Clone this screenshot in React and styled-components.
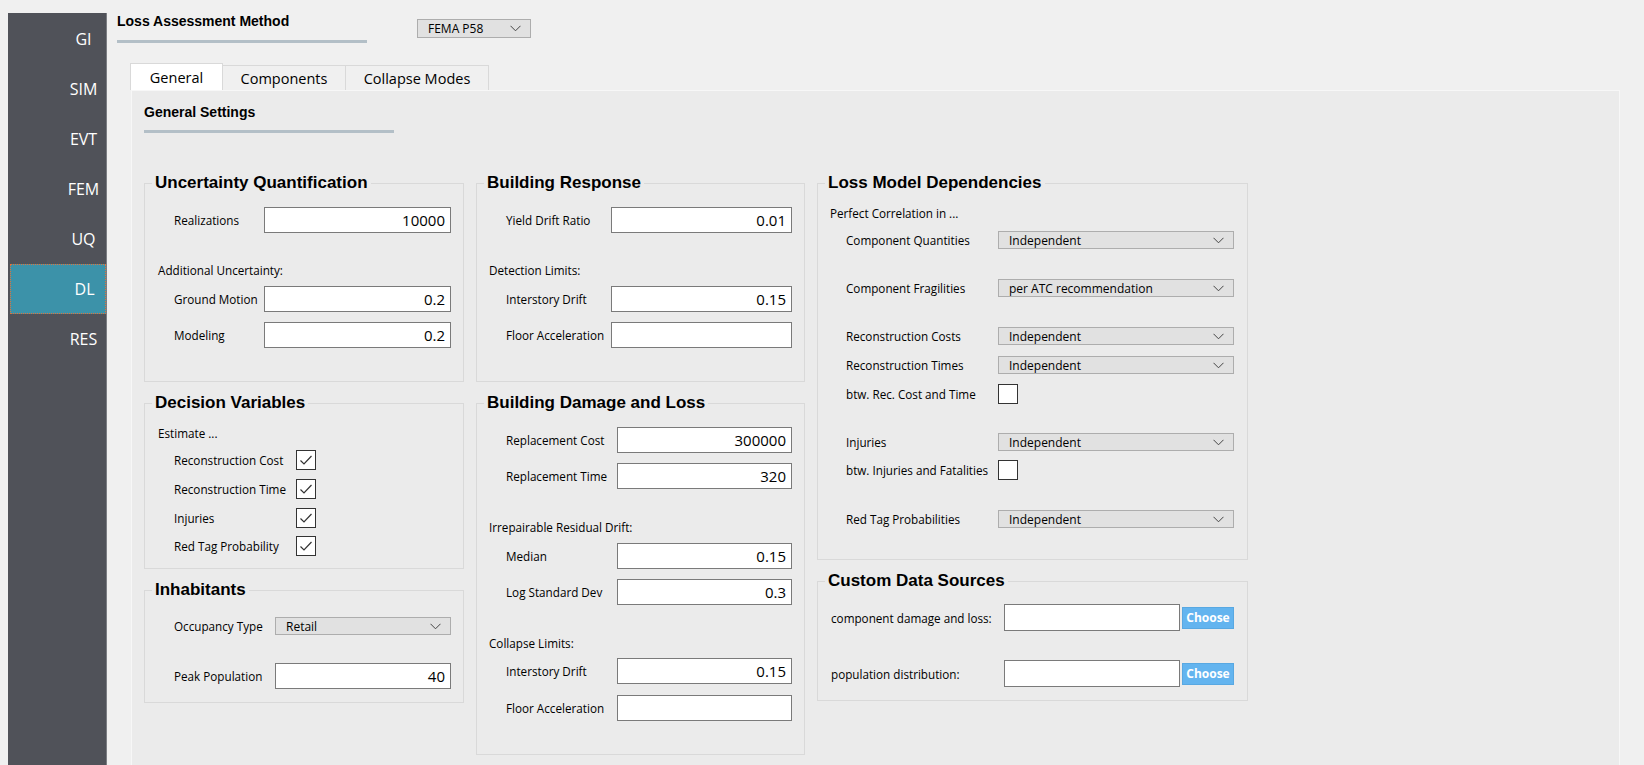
import React from "react";
import styled, { createGlobalStyle } from "styled-components";

const GlobalStyle = createGlobalStyle`
  html, body {
    margin: 0;
    padding: 0;
    background: #f0f0f0;
    font-family: "Open Sans", "Noto Sans", sans-serif;
    color: #000;
  }
  * {
    box-sizing: border-box;
  }
`;

const Window = styled.div`
  display: flex;
  height: 100vh;
  overflow: hidden;
  background: #f0f0f0;
`;

const Sidebar = styled.nav`
  width: 99px;
  margin: 13px 0 0 8px;
  padding-top: 1px;
  background: #505259;
  border-right: 1px solid #7c7e83;
  display: flex;
  flex-direction: column;
`;

const NavItem = styled.div`
  height: 50px;
  display: flex;
  align-items: center;
  justify-content: center;
  padding-left: 53px;
  color: #fff;
  font-size: 16px;
  background: ${(p) => (p.$active ? "#3c92a9" : "transparent")};
  outline: ${(p) => (p.$active ? "1px dotted #e0733a" : "none")};
  outline-offset: -1px;
  margin-left: ${(p) => (p.$active ? "2px" : "0")};
`;

const Main = styled.main`
  flex: 1;
  display: flex;
  flex-direction: column;
  padding: 13px 0 0 10px;
  min-width: 0;
`;

const HeaderRow = styled.div`
  display: flex;
  align-items: flex-start;
`;

const TitleBlock = styled.div`
  width: 250px;
  display: flex;
  flex-direction: column;
`;

const BoldTitle = styled.div`
  font-family: "Liberation Sans", Arial, sans-serif;
  font-weight: bold;
  font-size: 14px;
  line-height: 17px;
`;

const Bar = styled.div`
  height: 3px;
  margin-top: ${(p) => p.$mt || 10}px;
  background: #b3bfc7;
`;

const Select = styled.div`
  width: ${(p) => p.$w}px;
  height: ${(p) => p.$h || 18}px;
  margin: ${(p) => p.$margin || "0"};
  display: flex;
  align-items: center;
  justify-content: space-between;
  padding: 0 9px 0 10px;
  background: #e1e1e1;
  border: 1px solid #adadad;
  font-size: 12px;
  flex-shrink: 0;
`;

const Tabs = styled.div`
  display: flex;
  align-items: flex-end;
  margin: 20px 0 0 13px;
  height: 27px;
`;

const Tab = styled.div`
  width: ${(p) => p.$w}px;
  height: ${(p) => (p.$active ? 27 : 25)}px;
  display: flex;
  align-items: center;
  justify-content: center;
  font-size: 14.5px;
  background: ${(p) => (p.$active ? "#fff" : "#f0f0f0")};
  border: 1px solid #d9d9d9;
  border-bottom: none;
  margin-right: -1px;
  position: relative;
  z-index: ${(p) => (p.$active ? 1 : 0)};
`;

const Panel = styled.section`
  flex: 1;
  margin-left: 14px;
  width: 1489px;
  background: #ebebeb;
  border: 1px solid #f7f7f7;
  border-bottom: none;
  padding: 13px 0 0 12px;
`;

const SettingsBlock = styled.div`
  width: 250px;
`;

const Columns = styled.div`
  display: grid;
  grid-template-columns: 320px 329px 431px;
  column-gap: 12px;
  margin-top: 50px;
  align-items: start;
`;

const Column = styled.div`
  display: flex;
  flex-direction: column;
  gap: 21px;
`;

const Group = styled.div`
  position: relative;
  height: ${(p) => p.$h}px;
  border: 1px solid #d9d9d9;
  display: flex;
  flex-direction: column;
`;

const Legend = styled.div`
  position: absolute;
  top: -11px;
  left: 7px;
  padding: 0 3px;
  background: #ebebeb;
  font-family: "Liberation Sans", Arial, sans-serif;
  font-weight: bold;
  font-size: 17px;
  line-height: 20px;
`;

const Note = styled.div`
  margin-top: ${(p) => p.$mt}px;
  padding-left: ${(p) => p.$indent}px;
  font-size: 11.7px;
  line-height: 16px;
`;

const Row = styled.div`
  display: flex;
  align-items: center;
  height: ${(p) => p.$h || 26}px;
  margin-top: ${(p) => p.$mt}px;
  padding-left: ${(p) => p.$indent}px;
`;

const Label = styled.div`
  width: ${(p) => p.$w}px;
  flex-shrink: 0;
  font-size: 11.7px;
  line-height: 16px;
  white-space: nowrap;
`;

const Field = styled.div`
  width: ${(p) => p.$w}px;
  height: ${(p) => p.$h || 26}px;
  flex-shrink: 0;
  background: #fff;
  border: 1px solid #7a7a7a;
  display: flex;
  align-items: center;
  justify-content: flex-end;
  padding-right: 5px;
  font-size: 15px;
`;

const CheckBox = styled.div`
  width: 20px;
  height: 20px;
  background: #fff;
  border: 1px solid #333;
  display: flex;
  align-items: center;
  justify-content: center;
`;

const ChooseButton = styled.div`
  width: 52px;
  height: 22px;
  margin-left: 2px;
  background: #63b4ef;
  border: 1px solid #58a8e2;
  color: #fff;
  font-weight: bold;
  font-size: 12px;
  display: flex;
  align-items: center;
  justify-content: center;
`;

function Chevron() {
  return (
    <svg width="11" height="7" viewBox="0 0 11 7">
      <polyline points="0.5,0.8 5.5,5.8 10.5,0.8" fill="none" stroke="#444" strokeWidth="1" />
    </svg>
  );
}

function Check({ checked }) {
  return (
    <CheckBox>
      {checked && (
        <svg width="16" height="16" viewBox="0 0 16 16">
          <polyline points="2.5,8.5 6,12 13.5,4" fill="none" stroke="#333" strokeWidth="1.2" />
        </svg>
      )}
    </CheckBox>
  );
}

function Dropdown({ value, w, h, margin }) {
  return (
    <Select $w={w} $h={h} $margin={margin}>
      <span>{value}</span>
      <Chevron />
    </Select>
  );
}

const navItems = ["GI", "SIM", "EVT", "FEM", "UQ", "DL", "RES"];

const decisions = [
  ["Reconstruction Cost", 9],
  ["Reconstruction Time", 9],
  ["Injuries", 9],
  ["Red Tag Probability", 8],
];

const dependencies = [
  { label: "Component Quantities", mt: 9, value: "Independent" },
  { label: "Component Fragilities", mt: 28, value: "per ATC recommendation" },
  { label: "Reconstruction Costs", mt: 28, value: "Independent" },
  { label: "Reconstruction Times", mt: 9, value: "Independent" },
  { label: "btw. Rec. Cost and Time", mt: 9, check: true },
  { label: "Injuries", mt: 28, value: "Independent" },
  { label: "btw. Injuries and Fatalities", mt: 8, check: true },
  { label: "Red Tag Probabilities", mt: 29, value: "Independent" },
];

export default function App() {
  return (
    <>
      <GlobalStyle />
      <Window>
        <Sidebar>
          {navItems.map((n) => (
            <NavItem key={n} $active={n === "DL"}>
              {n}
            </NavItem>
          ))}
        </Sidebar>
        <Main>
          <HeaderRow>
            <TitleBlock>
              <BoldTitle>Loss Assessment Method</BoldTitle>
              <Bar />
            </TitleBlock>
            <Dropdown value="FEMA P58" w={114} h={19} margin="6px 0 0 50px" />
          </HeaderRow>

          <Tabs>
            <Tab $w={93} $active>General</Tab>
            <Tab $w={124}>Components</Tab>
            <Tab $w={144}>Collapse Modes</Tab>
          </Tabs>

          <Panel>
            <SettingsBlock>
              <BoldTitle>General Settings</BoldTitle>
              <Bar $mt={9} />
            </SettingsBlock>

            <Columns>
              <Column>
                <Group $h={199}>
                  <Legend>Uncertainty Quantification</Legend>
                  <Row $mt={23} $indent={29}>
                    <Label $w={90}>Realizations</Label>
                    <Field $w={187}>10000</Field>
                  </Row>
                  <Note $mt={29} $indent={13}>Additional Uncertainty:</Note>
                  <Row $mt={8} $indent={29}>
                    <Label $w={90}>Ground Motion</Label>
                    <Field $w={187}>0.2</Field>
                  </Row>
                  <Row $mt={10} $indent={29}>
                    <Label $w={90}>Modeling</Label>
                    <Field $w={187}>0.2</Field>
                  </Row>
                </Group>

                <Group $h={166}>
                  <Legend>Decision Variables</Legend>
                  <Note $mt={21} $indent={13}>Estimate ...</Note>
                  {decisions.map(([label, mt]) => (
                    <Row key={label} $h={20} $mt={mt} $indent={29}>
                      <Label $w={122}>{label}</Label>
                      <Check checked />
                    </Row>
                  ))}
                </Group>

                <Group $h={113}>
                  <Legend>Inhabitants</Legend>
                  <Row $h={18} $mt={26} $indent={29}>
                    <Label $w={101}>Occupancy Type</Label>
                    <Dropdown value="Retail" w={176} />
                  </Row>
                  <Row $mt={28} $indent={29}>
                    <Label $w={101}>Peak Population</Label>
                    <Field $w={176}>40</Field>
                  </Row>
                </Group>
              </Column>

              <Column>
                <Group $h={199}>
                  <Legend>Building Response</Legend>
                  <Row $mt={23} $indent={29}>
                    <Label $w={105}>Yield Drift Ratio</Label>
                    <Field $w={181}>0.01</Field>
                  </Row>
                  <Note $mt={29} $indent={12}>Detection Limits:</Note>
                  <Row $mt={8} $indent={29}>
                    <Label $w={105}>Interstory Drift</Label>
                    <Field $w={181}>0.15</Field>
                  </Row>
                  <Row $mt={10} $indent={29}>
                    <Label $w={105}>Floor Acceleration</Label>
                    <Field $w={181} />
                  </Row>
                </Group>

                <Group $h={352}>
                  <Legend>Building Damage and Loss</Legend>
                  <Row $mt={23} $indent={29}>
                    <Label $w={111}>Replacement Cost</Label>
                    <Field $w={175}>300000</Field>
                  </Row>
                  <Row $mt={10} $indent={29}>
                    <Label $w={111}>Replacement Time</Label>
                    <Field $w={175}>320</Field>
                  </Row>
                  <Note $mt={30} $indent={12}>Irrepairable Residual Drift:</Note>
                  <Row $mt={8} $indent={29}>
                    <Label $w={111}>Median</Label>
                    <Field $w={175}>0.15</Field>
                  </Row>
                  <Row $mt={10} $indent={29}>
                    <Label $w={111}>Log Standard Dev</Label>
                    <Field $w={175}>0.3</Field>
                  </Row>
                  <Note $mt={30} $indent={12}>Collapse Limits:</Note>
                  <Row $mt={7} $indent={29}>
                    <Label $w={111}>Interstory Drift</Label>
                    <Field $w={175}>0.15</Field>
                  </Row>
                  <Row $mt={11} $indent={29}>
                    <Label $w={111}>Floor Acceleration</Label>
                    <Field $w={175} />
                  </Row>
                </Group>
              </Column>

              <Column>
                <Group $h={377}>
                  <Legend>Loss Model Dependencies</Legend>
                  <Note $mt={21} $indent={12}>Perfect Correlation in ...</Note>
                  {dependencies.map((d) => (
                    <Row key={d.label} $h={20} $mt={d.mt} $indent={28}>
                      <Label $w={152}>{d.label}</Label>
                      {d.check ? <Check /> : <Dropdown value={d.value} w={236} />}
                    </Row>
                  ))}
                </Group>

                <Group $h={120}>
                  <Legend>Custom Data Sources</Legend>
                  <Row $h={27} $mt={22} $indent={13}>
                    <Label $w={173}>component damage and loss:</Label>
                    <Field $w={176} $h={27} />
                    <ChooseButton>Choose</ChooseButton>
                  </Row>
                  <Row $h={27} $mt={29} $indent={13}>
                    <Label $w={173}>population distribution:</Label>
                    <Field $w={176} $h={27} />
                    <ChooseButton>Choose</ChooseButton>
                  </Row>
                </Group>
              </Column>
            </Columns>
          </Panel>
        </Main>
      </Window>
    </>
  );
}
